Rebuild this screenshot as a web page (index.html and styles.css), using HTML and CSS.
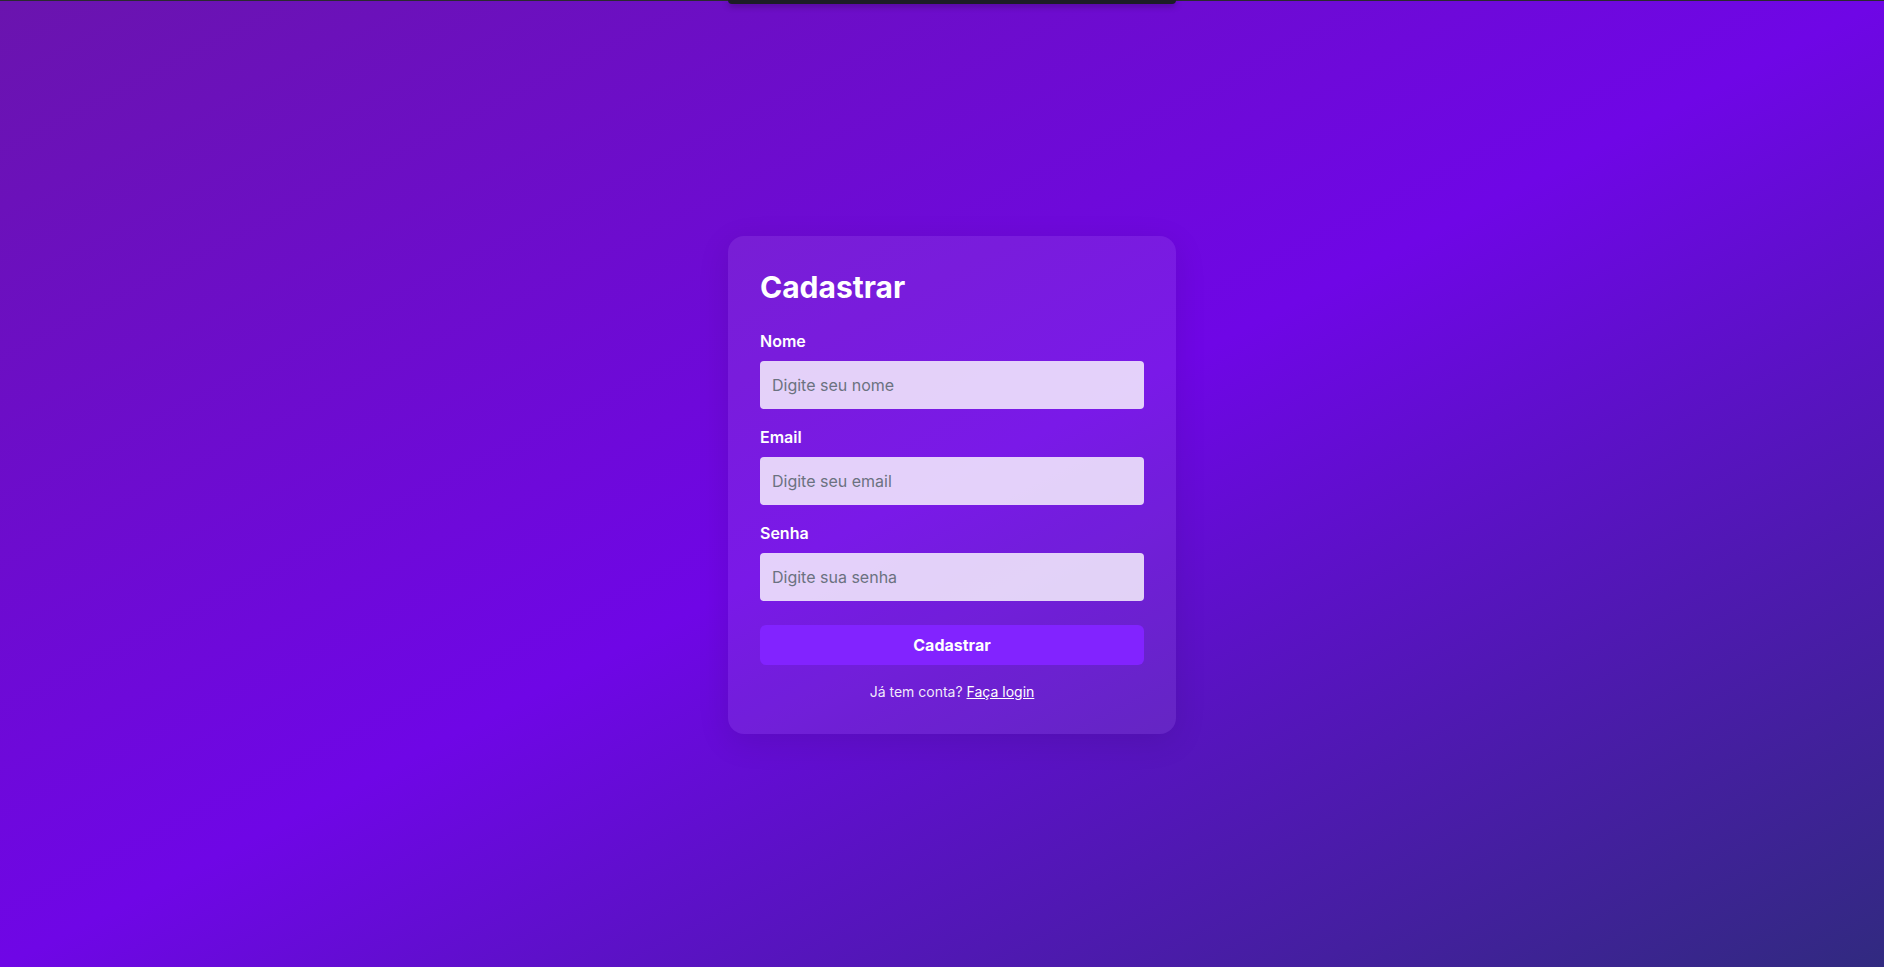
FILE: index.html
```html
<!DOCTYPE html>
<html lang="pt-BR">
<head>
<meta charset="UTF-8">
<title>Cadastrar</title>
<link rel="stylesheet" href="styles.css">
</head>
<body>
<div class="topline"></div>
<div class="toast"></div>
<main class="page">
  <form class="card">
    <h1 class="title">Cadastrar</h1>
    <div class="group">
      <label class="label" for="nome">Nome</label>
      <input class="input" id="nome" type="text" placeholder="Digite seu nome">
    </div>
    <div class="group">
      <label class="label" for="email">Email</label>
      <input class="input" id="email" type="email" placeholder="Digite seu email">
    </div>
    <div class="group">
      <label class="label" for="senha">Senha</label>
      <input class="input" id="senha" type="password" placeholder="Digite sua senha">
    </div>
    <button class="btn" type="button">Cadastrar</button>
    <p class="footer">Já tem conta? <a class="link" href="#">Faça login</a></p>
  </form>
</main>
</body>
</html>
```
FILE: styles.css
```css
* { box-sizing: border-box; }
html, body { margin: 0; padding: 0; height: 100%; }
body {
  font-family: Inter, "Noto Sans", sans-serif;
  line-height: 1.5;
  color: #fff;
  background: linear-gradient(to bottom right, #6a14ae 0%, #6f06e6 50%, #312a80 100%);
  display: flex;
  flex-direction: column;
  overflow: hidden;
}
.topline {
  height: 1px;
  background: #2a2a30;
  flex: none;
}
.toast {
  position: fixed;
  top: 0;
  left: 728px;
  width: 448px;
  height: 4px;
  background: #1c1d26;
  border-radius: 0 0 8px 8px;
  box-shadow: 0 2px 6px rgba(0,0,0,0.35);
}
.page {
  flex: 1;
  display: flex;
  align-items: center;
  justify-content: center;
  padding-left: 20px;
  padding-top: 2px;
}
.card {
  width: 448px;
  padding: 33px 32px 32px;
  background: rgba(255,255,255,0.08);
  border-radius: 16px;
  box-shadow: 0 8px 32px rgba(0,0,0,0.1);
}
.title {
  margin: 0 0 22px;
  font-size: 30px;
  font-weight: 700;
  line-height: 1.25;
  color: #fff;
}
.group { margin-bottom: 16px; }
.label {
  display: block;
  font-size: 16px;
  font-weight: 600;
  margin-bottom: 8px;
  color: #fff;
}
.input {
  display: block;
  width: 100%;
  height: 48px;
  padding: 0 12px;
  border: none;
  border-radius: 4px;
  background: rgba(255,255,255,0.8);
  font-family: inherit;
  font-size: 16px;
  color: #333;
  outline: none;
}
.input::placeholder { color: #6b7280; }
.btn {
  display: block;
  width: 100%;
  margin-top: 24px;
  padding: 8px;
  border: none;
  border-radius: 6px;
  background: #8223ff;
  color: #fff;
  font-family: inherit;
  font-size: 16px;
  font-weight: 700;
  line-height: 24px;
}
.footer {
  margin: 16px 0 0;
  text-align: center;
  font-size: 14px;
  line-height: 1.5;
  color: rgba(255,255,255,0.92);
}
.link { color: #fff; text-decoration: underline; }
```
